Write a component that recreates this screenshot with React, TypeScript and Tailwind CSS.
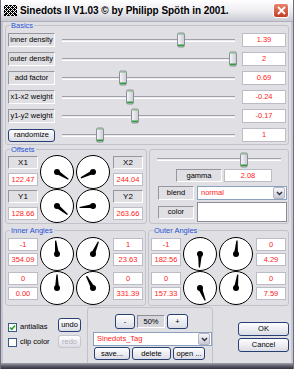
import React from 'react';

type Row = { label: string; value: string; thumb: number; button?: boolean };

const basics: Row[] = [
  { label: 'inner density', value: '1.39', thumb: 122 },
  { label: 'outer density', value: '2', thumb: 174 },
  { label: 'add factor', value: '0.69', thumb: 64 },
  { label: 'x1-x2 weight', value: '-0.24', thumb: 71 },
  { label: 'y1-y2 weight', value: '-0.17', thumb: 76 },
  { label: 'randomize', value: '1', thumb: 41, button: true },
];

function Lbl({ children, className = '' }: { children: React.ReactNode; className?: string }) {
  return (
    <div
      className={`flex items-center justify-center border border-t-[#96969e] border-l-[#96969e] border-b-white border-r-white text-black ${className}`}
    >
      {children}
    </div>
  );
}

function Val({ v, className = '' }: { v: string; className?: string }) {
  return (
    <div className={`flex items-center justify-center bg-white border border-[#bcbcc6] text-[#ff2222] ${className}`}>
      {v}
    </div>
  );
}

function Btn({ children, className = '', disabled }: { children: React.ReactNode; className?: string; disabled?: boolean }) {
  return (
    <button
      className={`flex items-center justify-center rounded-[3px] border bg-gradient-to-b from-white to-[#dcdce6] ${
        disabled ? 'border-[#c6c6ce] text-[#aeaeb8]' : 'border-[#283f74] text-black'
      } ${className}`}
    >
      {children}
    </button>
  );
}

function Thumb({ left }: { left: number }) {
  return (
    <div
      className="absolute top-1/2 -translate-y-1/2 w-[8px] h-[15px] rounded-[2px] border border-[#8c8c9a] bg-gradient-to-r from-[#f4f4f8] to-[#cfcfd8] flex flex-col justify-between overflow-hidden"
      style={{ left }}
    >
      <div className="h-[1px] bg-[#5cc05c]" />
      <div className="h-[2px] bg-[#2c9c38]" />
    </div>
  );
}

function Track() {
  return <div className="w-full h-[3px] border-t border-t-[#a0a0aa] border-b border-b-white bg-[#ebebef]" />;
}

function Group({ label, className = '', children }: { label?: string; className?: string; children?: React.ReactNode }) {
  return (
    <div className={`relative border border-[#c2c2ca] rounded-[3px] ${className}`}>
      {label && (
        <span className="absolute -top-[5px] left-[4px] px-[1px] bg-[#e0dfe3] text-[#1f52d6] leading-[9px]">{label}</span>
      )}
      {children}
    </div>
  );
}

function Dial({ deg }: { deg: number }) {
  const c = 17;
  const a = (deg * Math.PI) / 180;
  const len = 13.5;
  const tx = c + len * Math.sin(a);
  const ty = c - len * Math.cos(a);
  const px = Math.cos(a);
  const py = Math.sin(a);
  const pts = [
    [c + px * 2, c + py * 2],
    [tx + px * 0.6, ty + py * 0.6],
    [tx - px * 0.6, ty - py * 0.6],
    [c - px * 2, c - py * 2],
  ]
    .map((p) => p.join(','))
    .join(' ');
  return (
    <svg width="34" height="34" viewBox="0 0 34 34" className="block">
      <circle cx={c} cy={c} r="16.5" fill="white" stroke="black" strokeWidth="1" />
      <polygon points={pts} fill="black" />
      <circle cx={c} cy={c} r="3" fill="black" />
    </svg>
  );
}

function DialGrid({ degs }: { degs: number[] }) {
  return (
    <div className="grid grid-cols-[34px_34px] gap-x-[2px] ml-[2px]">
      {degs.map((d, i) => (
        <Dial key={i} deg={d} />
      ))}
    </div>
  );
}

function OffsetCol({ a, b, c, d }: { a: string; b: string; c: string; d: string }) {
  return (
    <div className="flex flex-col w-[30px]">
      <div className="h-[34px] pt-[1px] flex flex-col gap-[4px]">
        <Lbl className="h-[13px] text-[8px]">{a}</Lbl>
        <Val v={b} className="h-[13px]" />
      </div>
      <div className="h-[34px] pt-[1px] flex flex-col gap-[4px]">
        <Lbl className="h-[13px] text-[8px]">{c}</Lbl>
        <Val v={d} className="h-[13px]" />
      </div>
    </div>
  );
}

function AngleCol({ vals }: { vals: string[] }) {
  return (
    <div className="flex flex-col w-[30px]">
      <div className="h-[34px] pt-[1px] flex flex-col gap-[2px]">
        <Val v={vals[0]} className="h-[13px]" />
        <Val v={vals[1]} className="h-[13px]" />
      </div>
      <div className="h-[34px] pt-[1px] flex flex-col gap-[2px]">
        <Val v={vals[2]} className="h-[13px]" />
        <Val v={vals[3]} className="h-[13px]" />
      </div>
    </div>
  );
}

function Check({ checked, label }: { checked?: boolean; label: string }) {
  return (
    <div className="flex items-center gap-[3px] h-[10px]">
      <div className="w-[9px] h-[9px] border border-[#3a5a88] bg-white flex items-center justify-center">
        {checked && (
          <svg width="7" height="7" viewBox="0 0 7 7">
            <path d="M1 3.4 L2.8 5.3 L6 1.4" stroke="#22a322" strokeWidth="1.5" fill="none" />
          </svg>
        )}
      </div>
      <span className="text-black">{label}</span>
    </div>
  );
}

function DropArrow() {
  return (
    <div className="w-[12px] h-[12px] mr-[1px] rounded-[2px] border border-[#b4b4c2] bg-gradient-to-b from-[#f6f6fa] to-[#c9c9d6] flex items-center justify-center">
      <svg width="7" height="5" viewBox="0 0 7 5">
        <path d="M1 1 L3.5 3.5 L6 1" stroke="#30303a" strokeWidth="1.4" fill="none" />
      </svg>
    </div>
  );
}

function TitleIcon() {
  return (
    <svg width="13" height="11" viewBox="0 0 13 11" className="block">
      <rect width="13" height="11" fill="black" />
      <g stroke="white" strokeWidth="1">
        <path d="M0 0 L11 11 M4 0 L13 9 M0 4 L7 11 M8 0 L13 5" />
        <path d="M13 0 L2 11 M9 0 L0 9 M13 4 L6 11 M5 0 L0 5" />
      </g>
    </svg>
  );
}

export default function App() {
  return (
    <div className="w-[294px] h-[369px] flex flex-col overflow-hidden bg-[#c6c6d0] border-x border-[#6e6e7c] font-['Liberation_Sans',Arial,sans-serif] text-[7.5px] leading-none">
      {/* title bar */}
      <div className="h-[22px] shrink-0 flex items-center bg-gradient-to-b from-white via-[#eeeef2] to-[#cacad4] border-b border-[#b0b0bc]">
        <div className="ml-[3px]">
          <TitleIcon />
        </div>
        <span className="ml-[3px] text-[10px] font-bold tracking-[-0.05px] text-black">
          Sinedots II V1.03 © by Philipp Spöth in 2001.
        </span>
        <div className="ml-auto mr-[4px] w-[16px] h-[15px] rounded-[3px] border border-white bg-gradient-to-b from-[#e8846c] to-[#c23a1e] flex items-center justify-center">
          <svg width="9" height="9" viewBox="0 0 9 9">
            <path d="M1 1 L8 8 M8 1 L1 8" stroke="white" strokeWidth="1.8" />
          </svg>
        </div>
      </div>

      {/* body */}
      <div className="mx-[2px] h-[341px] shrink-0 overflow-hidden bg-[#e0dfe3] px-[2px] flex flex-col">
        <Group label="Basics" className="mt-[3px] h-[120px] px-[2px] pt-[4.5px]">
          {basics.map((r) => (
            <div key={r.label} className="h-[19px] flex items-center">
              {r.button ? (
                <Btn className="w-[47px] h-[13px] text-[7.5px]">{r.label}</Btn>
              ) : (
                <Lbl className="w-[47px] h-[14px]">{r.label}</Lbl>
              )}
              <div className="relative flex-1 h-full flex items-center px-[7px]">
                <Track />
                <Thumb left={r.thumb} />
              </div>
              <Val v={r.value} className="w-[44px] h-[14px]" />
            </div>
          ))}
        </Group>

        <div className="mt-[4px] flex gap-[2px] h-[78px]">
          <Group label="Offsets" className="flex-1 pl-[2px] pt-[5px]">
            <div className="flex">
              <OffsetCol a="X1" b="122.47" c="Y1" d="128.66" />
              <DialGrid degs={[122.47, 244.04, 128.66, 263.66]} />
              <div className="ml-[3px]">
                <OffsetCol a="X2" b="244.04" c="Y2" d="263.66" />
              </div>
            </div>
          </Group>
          <Group className="flex-1 pt-[1px] flex flex-col">
            <div className="relative h-[17px] flex items-center px-[7px]">
              <Track />
              <Thumb left={90} />
            </div>
            <div className="mt-[1px] ml-[26px] flex gap-[2px]">
              <Lbl className="w-[46px] h-[13px]">gamma</Lbl>
              <Val v="2.08" className="w-[48px] h-[13px]" />
            </div>
            <div className="mt-[4px] ml-[8px] flex gap-[3px]">
              <Lbl className="w-[36px] h-[14px]">blend</Lbl>
              <div className="w-[90px] h-[14px] bg-white border border-[#8aa0bc] flex items-center justify-between">
                <span className="ml-[3px] text-[#ff2222]">normal</span>
                <DropArrow />
              </div>
            </div>
            <div className="mt-[2px] ml-[8px] flex items-center gap-[3px]">
              <Lbl className="w-[36px] h-[13px]">color</Lbl>
              <div className="w-[90px] h-[20px] bg-white border border-[#8c8c96]" />
            </div>
          </Group>
        </div>

        <div className="mt-[6px] flex gap-[2px] h-[78px]">
          <Group label="Inner Angles" className="flex-1 pl-[2px] pt-[6px]">
            <div className="flex">
              <AngleCol vals={['-1', '354.09', '0', '0.00']} />
              <DialGrid degs={[354.09, 23.63, 0, 331.39]} />
              <div className="ml-[3px]">
                <AngleCol vals={['1', '23.63', '0', '331.39']} />
              </div>
            </div>
          </Group>
          <Group label="Outer Angles" className="flex-1 pl-[2px] pt-[6px]">
            <div className="flex">
              <AngleCol vals={['-1', '182.56', '0', '157.33']} />
              <DialGrid degs={[182.56, 4.29, 157.33, 7.59]} />
              <div className="ml-[3px]">
                <AngleCol vals={['0', '4.29', '0', '7.59']} />
              </div>
            </div>
          </Group>
        </div>

        {/* bottom */}
        <div className="flex items-start">
          <div className="w-[82px] flex pt-[12px] pl-[3px]">
            <div className="flex flex-col gap-[5px] pt-[4px]">
              <Check checked label="antialias" />
              <Check label="clip color" />
            </div>
            <div className="ml-auto mr-[6px] flex flex-col gap-[3px]">
              <Btn className="w-[23px] h-[14px]">undo</Btn>
              <Btn disabled className="w-[23px] h-[13px]">redo</Btn>
            </div>
          </div>
          <Group className="mt-[1px] w-[126px] h-[60px] pt-[6px] pl-[5px] flex flex-col">
            <div className="ml-[22px] flex items-center gap-[2px]">
              <Btn className="w-[20px] h-[15px]">-</Btn>
              <div className="w-[28px] h-[13px] flex items-center justify-center bg-[#d6d6dc] border border-t-[#8e8e98] border-l-[#8e8e98] border-b-white border-r-white text-black">
                50%
              </div>
              <Btn className="w-[21px] h-[15px]">+</Btn>
            </div>
            <div className="mt-[3px] w-[119px] h-[14px] bg-white border border-[#8aa0bc] flex items-center justify-between">
              <span className="ml-[3px] text-[#ff2222]">Sinedots_Tag</span>
              <DropArrow />
            </div>
            <div className="mt-[1px] ml-[1px] flex gap-[2px]">
              <Btn className="w-[36px] h-[13px]">save...</Btn>
              <Btn className="w-[39px] h-[13px]">delete</Btn>
              <Btn className="w-[32px] h-[13px]">open ...</Btn>
            </div>
          </Group>
          <div className="ml-auto mt-[16px] flex flex-col gap-[2px]">
            <Btn className="w-[51px] h-[14px]">OK</Btn>
            <Btn className="w-[51px] h-[14px]">Cancel</Btn>
          </div>
        </div>
      </div>
      {/* bottom window edge */}
      <div className="flex-1 bg-gradient-to-b from-[#a6a6b2] via-[#5c5c6a] to-[#34343e]" />
    </div>
  );
}
